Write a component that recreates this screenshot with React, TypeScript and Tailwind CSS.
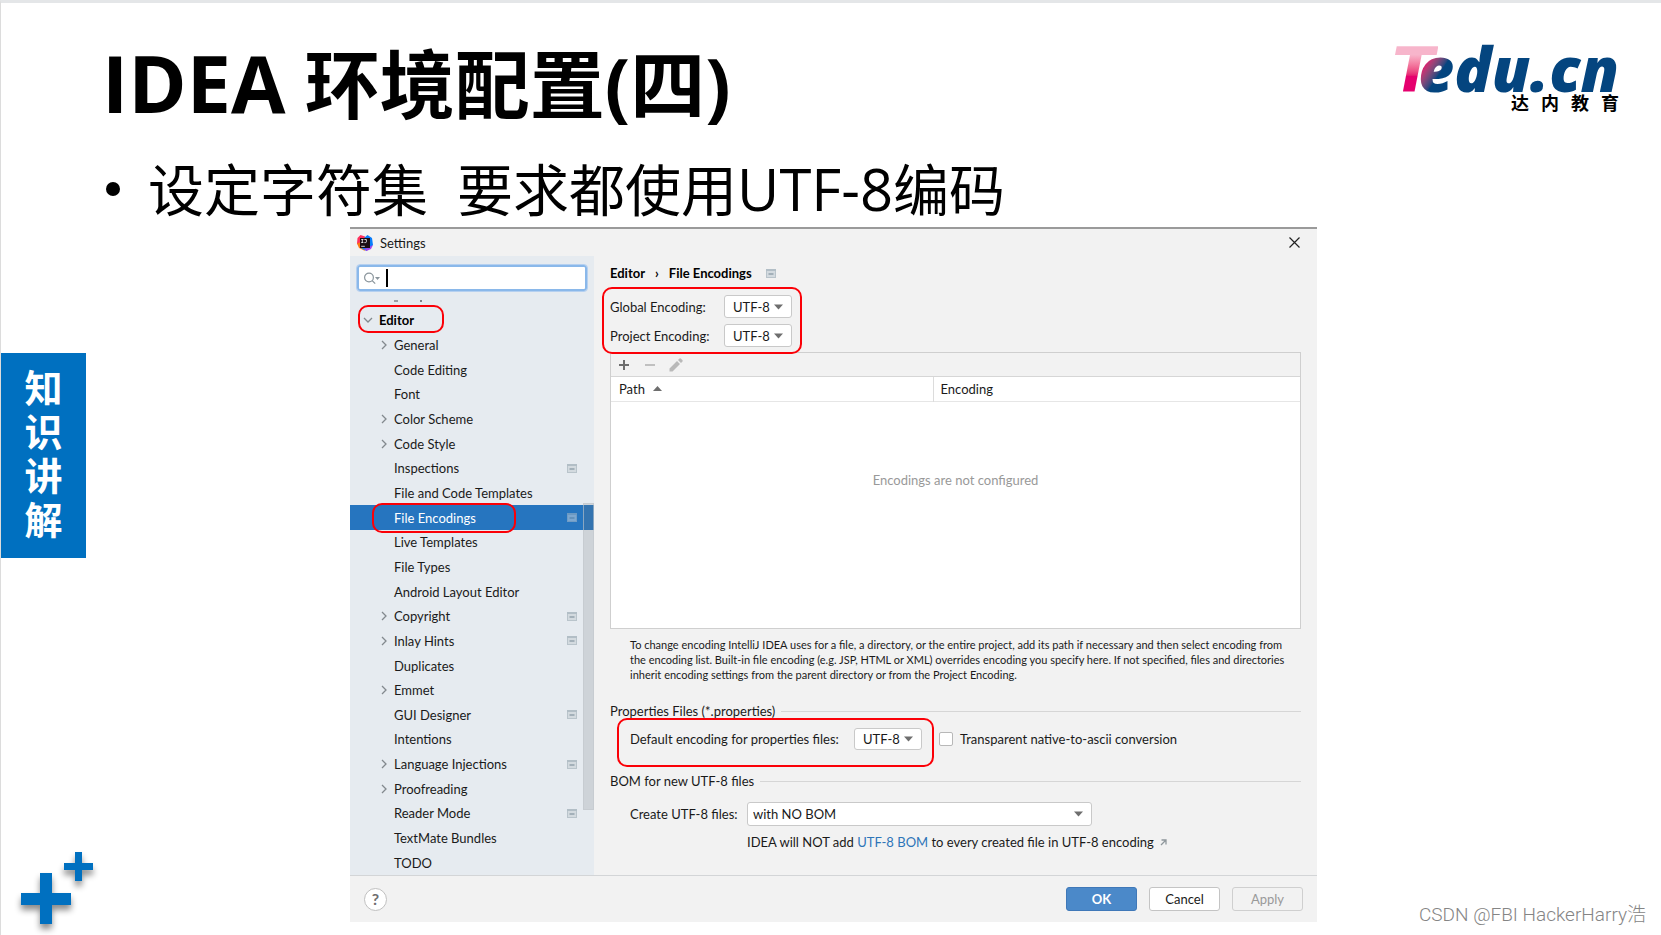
import { type ReactNode } from "react";
import clsx from "clsx";

type TreeItem = {
  label: string;
  expandable?: boolean;
  projectLevel?: boolean;
  selected?: boolean;
};

const treeItems: TreeItem[] = [
  { label: "General", expandable: true },
  { label: "Code Editing" },
  { label: "Font" },
  { label: "Color Scheme", expandable: true },
  { label: "Code Style", expandable: true },
  { label: "Inspections", projectLevel: true },
  { label: "File and Code Templates" },
  { label: "File Encodings", projectLevel: true, selected: true },
  { label: "Live Templates" },
  { label: "File Types" },
  { label: "Android Layout Editor" },
  { label: "Copyright", expandable: true, projectLevel: true },
  { label: "Inlay Hints", expandable: true, projectLevel: true },
  { label: "Duplicates" },
  { label: "Emmet", expandable: true },
  { label: "GUI Designer", projectLevel: true },
  { label: "Intentions" },
  { label: "Language Injections", expandable: true, projectLevel: true },
  { label: "Proofreading", expandable: true },
  { label: "Reader Mode", projectLevel: true },
  { label: "TextMate Bundles" },
  { label: "TODO" },
];

function Highlight({ className }: { className: string }) {
  return (
    <div
      className={clsx(
        "pointer-events-none absolute z-10 rounded-[10px] border-2 border-[#fb0007]",
        className,
      )}
    />
  );
}

function ProjectIcon({ dimmed }: { dimmed?: boolean }) {
  return (
    <svg
      width="10"
      height="9"
      viewBox="0 0 10 9"
      className={clsx("shrink-0", dimmed && "opacity-50")}
      aria-hidden="true"
    >
      <rect x="0.5" y="0.5" width="9" height="8" fill="#d3dadf" stroke="#b9c4cb" />
      <path d="M0 1h10" stroke="#b2bec6" strokeWidth="2" />
      <rect x="2.5" y="4" width="5" height="2" fill="#a3b0b9" />
    </svg>
  );
}

function IdeaIcon() {
  return (
    <svg width="16" height="16" viewBox="0 0 16 16" aria-hidden="true">
      <path d="M0.5 3 3.500 0 8 1.500 8 8 3 12 0 8.500z" fill="#fe315d" />
      <path d="M0 8.500 4 7 8 16 2 13z" fill="#f97a12" />
      <path d="M7 3 10.500 0 15 3 16 10 9.500 16 4 13z" fill="#087cfa" />
      <path d="M10 13 16 10 14 14 9.500 16 7 14z" fill="#a445e8" />
      <rect x="3" y="3" width="10" height="10" fill="#1a0d12" />
      <path
        d="M4.200 4.500h2.200M5.300 4.500v3M4.200 7.500h2.200M7.400 4.500h2v2.200q0 .9-1 .9h-1M4.200 11.300h3.600"
        fill="none"
        stroke="#fff"
        strokeWidth="0.8"
      />
    </svg>
  );
}

function Chevron({ open }: { open?: boolean }) {
  return (
    <svg width="10" height="10" viewBox="0 0 10 10" className="shrink-0" aria-hidden="true">
      <path
        d={open ? "M1 3l4 4 4-4" : "M3 1l4 4-4 4"}
        fill="none"
        stroke="#83898e"
        strokeWidth="1.300"
      />
    </svg>
  );
}

function SelectBox({
  id,
  value,
  className,
  textClassName,
}: {
  id: string;
  value: string;
  className: string;
  textClassName: string;
}) {
  return (
    <div className={clsx("relative", className)}>
      <select
        id={id}
        defaultValue={value}
        className={clsx(
          "block h-full w-full appearance-none rounded-[3px] border border-[#c9c9c9] bg-white text-[#1a1a1a] outline-none",
          textClassName,
        )}
      >
        <option>{value}</option>
      </select>
      <svg
        className="pointer-events-none absolute right-[9px] top-1/2 -translate-y-1/2"
        width="9"
        height="6"
        viewBox="0 0 9 6"
        aria-hidden="true"
      >
        <path d="M0 0.500h9L4.500 5.500z" fill="#6e6e6e" />
      </svg>
    </div>
  );
}

function SectionTitle({ children }: { children: ReactNode }) {
  return (
    <div className="flex items-center gap-1.5">
      <h3>{children}</h3>
      <div className="h-px flex-1 bg-[#d6d6d6]" />
    </div>
  );
}

function Logo() {
  return (
    <div className="flex flex-col items-end pt-2">
      <div className="flex h-[51px] items-baseline font-['Open_Sans',sans-serif] text-[62px] font-extrabold italic leading-[54px] text-[#04457f]">
        <span className="bg-linear-to-b from-[#f7b5cb] from-20% to-[#e5006e] to-60% bg-clip-text pr-1 font-['DejaVu_Sans',sans-serif] font-bold text-transparent">
          T
        </span>
        <span className="-ml-5 bg-linear-to-br from-[#e5006e] from-30% to-[#04457f] to-60% bg-clip-text text-transparent">
          e
        </span>
        <span>du.cn</span>
      </div>
      <div className="flex gap-3 font-['Noto_Sans_CJK_SC',sans-serif] text-[18px] font-bold leading-5 text-black">
        <span>达</span>
        <span>内</span>
        <span>教</span>
        <span>育</span>
      </div>
    </div>
  );
}

function PlusMarks() {
  return (
    <svg
      width="95"
      height="94"
      viewBox="0 0 95 94"
      className="drop-shadow-[0_5px_3px_rgba(0,0,0,0.45)]"
      aria-hidden="true"
    >
      <path d="M39 32h12v20h19v12H51v19H39V64H20V52h19z" fill="#0070c0" />
      <path d="M74 11h7v11h11v7H81v11h-7V29H63v-7h11z" fill="#0070c0" />
    </svg>
  );
}

function Sidebar() {
  return (
    <aside className="relative flex w-[244px] shrink-0 flex-col bg-[#e6ebf0]">
      <label className="mx-[7px] mt-[9px] flex h-[26px] items-center rounded-[3px] border-2 border-[#8ab8ea] bg-white pl-[5px] outline-1 outline-[#b5d0f0]">
        <svg width="16" height="13" viewBox="0 0 16 13" className="shrink-0" aria-hidden="true">
          <circle cx="5" cy="5.500" r="4.400" fill="none" stroke="#8a959c" strokeWidth="1.200" />
          <path d="M8.200 8.700l3 3" stroke="#8a959c" strokeWidth="1.200" />
          <path d="M11 5h5l-2.500 3z" fill="#8a959c" />
        </svg>
        <span className="ml-1.5 h-[18px] w-[2px] shrink-0 bg-black" />
        <input
          type="text"
          aria-label="Search settings"
          className="w-full min-w-0 bg-transparent outline-none"
        />
      </label>
      {/* descenders of the row scrolled out above the list */}
      <div className="flex h-[17px] items-end gap-[22px] pb-1.5 pl-[44px]">
        <span className="h-[2px] w-[4px] bg-[#9aa0a5]" />
        <span className="h-[2px] w-[2px] bg-[#7d8388]" />
      </div>
      <ul className="flex h-[567px] flex-col">
        <li className="relative flex flex-1 items-center gap-1.5 pl-[13px] font-bold text-black">
          <Chevron open />
          Editor
          <Highlight className="-top-[3px] left-2 h-7 w-[86px]" />
        </li>
        {treeItems.map((item) => (
          <li
            key={item.label}
            className={clsx(
              "relative flex flex-1 items-center pl-[29px] pr-[17px]",
              item.selected && "bg-[#2675bf] text-white",
            )}
          >
            <span className="flex w-[15px] shrink-0 items-center">
              {item.expandable ? <Chevron /> : null}
            </span>
            <span className="flex-1">{item.label}</span>
            {item.projectLevel ? <ProjectIcon dimmed={item.selected} /> : null}
            {item.selected ? (
              <Highlight className="-top-[2px] left-[22px] h-[30px] w-[144px]" />
            ) : null}
          </li>
        ))}
      </ul>
      <div className="absolute right-0 top-[247px] h-[307px] w-[11px] border border-[#c3c8cd]/60 bg-[#70757a]/20" />
    </aside>
  );
}

function EncodingTable() {
  return (
    <div className="h-[277px] border border-[#cfcfcf] bg-white">
      <div className="flex h-6 items-center gap-2.5 border-b border-[#d6d6d6] bg-[#f2f2f2] pl-[5px]">
        <button type="button" aria-label="Add" className="flex h-4 w-4 items-center justify-center">
          <svg width="10" height="10" viewBox="0 0 10 10" aria-hidden="true">
            <path d="M5 0v10M0 5h10" stroke="#6e6e6e" strokeWidth="2" />
          </svg>
        </button>
        <button type="button" aria-label="Remove" className="flex h-4 w-4 items-center justify-center">
          <svg width="10" height="10" viewBox="0 0 10 10" aria-hidden="true">
            <path d="M0 5h10" stroke="#c0c0c0" strokeWidth="2" />
          </svg>
        </button>
        <button type="button" aria-label="Edit" className="flex h-4 w-4 items-center justify-center">
          <svg width="14" height="14" viewBox="0 0 14 14" aria-hidden="true">
            <path
              d="M0.500 13.500v-3L8 3l3 3-7.500 7.500zM9 2l1.500-1.500q.7-.5 1.300 0L13.500 2.200q.5.6 0 1.300L12 5z"
              fill="#b9b9b9"
            />
          </svg>
        </button>
      </div>
      <table className="w-full table-fixed">
        <thead>
          <tr className="h-6 border-b border-[#e6e6e6] text-left">
            <th className="w-[322px] border-r border-[#dcdcdc] pl-2 font-normal">
              <span className="flex items-center gap-2">
                Path
                <svg width="9" height="5" viewBox="0 0 9 5" aria-hidden="true">
                  <path d="M0 5h9L4.500 0z" fill="#6e6e6e" />
                </svg>
              </span>
            </th>
            <th className="pl-[7px] font-normal">Encoding</th>
          </tr>
        </thead>
        <tbody>
          <tr>
            <td colSpan={2} className="pt-[69px] text-center text-[#999999]">
              Encodings are not configured
            </td>
          </tr>
        </tbody>
      </table>
    </div>
  );
}

function FileEncodings() {
  return (
    <section className="flex-1 pl-4 pr-4">
      <div className="flex h-[34px] items-center font-bold text-black">
        Editor
        <span className="mx-2.5">›</span>
        File Encodings
        <span className="ml-3.5">
          <ProjectIcon />
        </span>
      </div>

      <div className="relative grid grid-cols-[114px_68px] items-center gap-y-[6px] pb-[5px] pt-[5px]">
        <label htmlFor="global-encoding">Global Encoding:</label>
        <SelectBox id="global-encoding" value="UTF-8" className="h-[23px]" textClassName="pl-2" />
        <label htmlFor="project-encoding">Project Encoding:</label>
        <SelectBox id="project-encoding" value="UTF-8" className="h-[23px]" textClassName="pl-2" />
        <Highlight className="-left-2 -top-[3px] h-[67px] w-[200px]" />
      </div>

      <EncodingTable />

      <p className="mt-2 pl-5 pr-2 text-[11px] leading-[15px]">
        To change encoding IntelliJ IDEA uses for a file, a directory, or the entire project, add
        its path if necessary and then select encoding from the encoding list. Built-in file
        encoding (e.g. JSP, HTML or XML) overrides encoding you specify here. If not specified,
        files and directories inherit encoding settings from the parent directory or from the
        Project Encoding.
      </p>

      <div className="mt-5">
        <SectionTitle>Properties Files (*.properties)</SectionTitle>
        <div className="relative mt-2 flex h-[22px] items-center pl-5">
          <label htmlFor="properties-encoding" className="w-[224px] whitespace-nowrap">
            Default encoding for properties files:
          </label>
          <SelectBox
            id="properties-encoding"
            value="UTF-8"
            className="h-[22px] w-[68px]"
            textClassName="pl-2"
          />
          <label className="ml-[17px] flex items-center gap-[7px]">
            <input
              type="checkbox"
              className="h-[14px] w-[14px] appearance-none rounded-[2px] border border-[#b8b8b8] bg-white"
            />
            Transparent native-to-ascii conversion
          </label>
          <Highlight className="-top-[10px] left-[7px] h-[49px] w-[317px]" />
        </div>
      </div>

      <div className="mt-[22px]">
        <SectionTitle>BOM for new UTF-8 files</SectionTitle>
        <div className="mt-3 grid grid-cols-[117px_345px] items-center gap-y-[7px] pl-5">
          <label htmlFor="bom">Create UTF-8 files:</label>
          <SelectBox id="bom" value="with NO BOM" className="h-6" textClassName="pl-[5px]" />
          <p className="col-start-2 flex w-max items-center gap-1.5 whitespace-nowrap">
            <span>
              IDEA will NOT add{" "}
              <a href="#bom" className="text-[#2e75b8]">
                UTF-8 BOM
              </a>{" "}
              to every created file in UTF-8 encoding
            </span>
            <svg width="7" height="7" viewBox="0 0 7 7" className="shrink-0" aria-hidden="true">
              <path
                d="M1.500 1h4.500v4.500M6 1 1 6"
                fill="none"
                stroke="#8f979c"
                strokeWidth="1.300"
              />
            </svg>
          </p>
        </div>
      </div>
    </section>
  );
}

function SettingsWindow() {
  return (
    <div className="border-t-2 border-[#9a9a9a] bg-[#f2f2f2] font-['Lato',sans-serif] text-[13px] leading-[18px] text-[#1a1a1a]">
      <header className="flex h-[27px] items-center pl-[7px] pr-[17px]">
        <IdeaIcon />
        <h2 className="ml-[7px] flex-1">Settings</h2>
        <button type="button" aria-label="Close">
          <svg width="11" height="11" viewBox="0 0 11 11" aria-hidden="true">
            <path
              d="M0.500 0.500l10 10M10.500 0.500l-10 10"
              stroke="#222"
              strokeWidth="1.200"
            />
          </svg>
        </button>
      </header>
      <div className="flex">
        <Sidebar />
        <FileEncodings />
      </div>
      <footer className="flex h-[47px] items-center gap-3 border-t border-[#d3d5d7] pl-3.5 pr-3.5">
        <button
          type="button"
          className="mr-auto h-[23px] w-[23px] rounded-full border border-[#c0c0c0] bg-white text-[16px] font-bold leading-5 text-[#6e6e6e]"
        >
          ?
        </button>
        <button
          type="button"
          className="h-6 w-[71px] rounded-[3px] border border-[#3f78b8] bg-[#4b89c9] font-bold text-white"
        >
          OK
        </button>
        <button type="button" className="h-6 w-[71px] rounded-[3px] border border-[#c4c4c4] bg-white">
          Cancel
        </button>
        <button
          type="button"
          disabled
          className="h-6 w-[71px] rounded-[3px] border border-[#cfcfcf] text-[#999999]"
        >
          Apply
        </button>
      </footer>
    </div>
  );
}

export default function App() {
  return (
    <div className="relative flex min-h-screen border-l border-t-3 border-l-[#dcdcdc] border-t-[#e4e6e8] bg-white font-['Open_Sans','Noto_Sans_CJK_SC',sans-serif] text-black">
      <div className="flex w-[95px] shrink-0 flex-col">
        <div className="mt-[350px] flex h-[205px] w-[85px] flex-col items-center justify-center bg-[#0070c0] pb-1.5 text-[38px] font-bold leading-[44px] text-white">
          <span>知</span>
          <span>识</span>
          <span>讲</span>
          <span>解</span>
        </div>
        <div className="mt-auto">
          <PlusMarks />
        </div>
      </div>

      <main className="min-w-0 flex-1">
        <div className="flex h-[132px] items-start justify-between pl-1.5 pr-[42px] pt-[30px]">
          <h1 className="text-[75px] font-bold leading-[100px]">
            <span className="text-[79px]">IDEA</span> 环境配置(四)
          </h1>
          <Logo />
        </div>
        <ul className="mt-4 h-[76px] pl-2.5">
          <li className="flex items-center text-[56px] leading-[76px]">
            <span className="mr-7 h-[14px] w-[14px] rounded-full bg-black" />
            <span className="whitespace-pre">
              设定字符集  要求都使用<span className="text-[58px]">UTF-8</span>编码
            </span>
          </li>
        </ul>
        <div className="ml-[254px] mr-[344px]">
          <SettingsWindow />
        </div>
      </main>

      <p className="absolute bottom-2 right-[15px] font-['Roboto','Noto_Sans_CJK_SC',sans-serif] text-[19px] font-light leading-6 text-[#858585]">
        CSDN @FBI HackerHarry浩
      </p>
    </div>
  );
}
